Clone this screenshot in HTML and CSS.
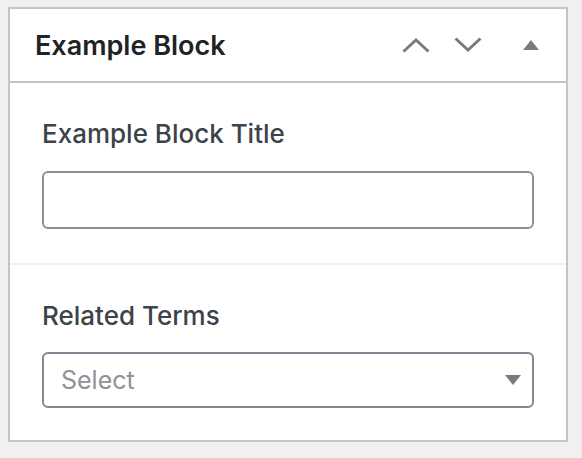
FILE: index.html
```html
<!DOCTYPE html>
<html>
<head>
    <link rel="stylesheet" href="styles.css">
</head>
<body>
    <div class="postbox">
        <div class="postbox-header">
            <h2 class="hndle">Example Block</h2>
            <div class="handle-actions">
                <button class="handle-btn" aria-label="Move up">
                    <svg width="28" height="16" viewBox="0 0 28 16"><path d="M1.5 14.5 L14 3 L26.5 14.5" fill="none" stroke="#787c82" stroke-width="3"/></svg>
                </button>
                <button class="handle-btn" aria-label="Move down">
                    <svg width="28" height="16" viewBox="0 0 28 16"><path d="M1.5 1.5 L14 13 L26.5 1.5" fill="none" stroke="#787c82" stroke-width="3"/></svg>
                </button>
                <button class="handle-btn toggle" aria-label="Toggle panel">
                    <svg width="16" height="10" viewBox="0 0 16 10"><path d="M0 10 L8 0 L16 10 Z" fill="#787c82"/></svg>
                </button>
            </div>
        </div>
        <div class="inside">
            <div class="field">
                <label for="blockTitle">Example Block Title</label>
                <input type="text" id="blockTitle" name="blockTitle">
            </div>
            <div class="field">
                <label for="relatedTerms">Related Terms</label>
                <div class="select-wrap">
                    <select id="relatedTerms" name="relatedTerms">
                        <option value="">Select</option>
                    </select>
                    <svg class="select-arrow" width="16" height="10" viewBox="0 0 16 10"><path d="M0 0 L16 0 L8 10 Z" fill="#787c82"/></svg>
                </div>
            </div>
        </div>
    </div>
</body>
</html>
```

FILE: styles.css
```css
body {
    margin: 0;
    padding: 7px 14px 0 8px;
    background-color: #f0f0f1;
    font-family: Inter, "Liberation Sans", sans-serif;
}

.postbox {
    background-color: #fff;
    border: 2px solid #c3c4c7;
}

.postbox-header {
    display: flex;
    align-items: center;
    justify-content: space-between;
    height: 72px;
    padding: 0 27px 0 25px;
    border-bottom: 2px solid #c3c4c7;
}

.hndle {
    margin: 0;
    font-size: 27px;
    font-weight: 600;
    color: #1d2327;
}

.handle-actions {
    display: flex;
    align-items: center;
}

.handle-btn {
    background: none;
    border: 0;
    padding: 0;
    margin-left: 24px;
    display: flex;
}

.handle-btn.toggle {
    margin-left: 41px;
}

.field {
    padding: 35px 32px 34px;
}

.field + .field {
    border-top: 2px solid #f0f0f1;
    padding-bottom: 32px;
}

label {
    display: block;
    margin-bottom: 21px;
    font-size: 26px;
    line-height: 32px;
    font-weight: 500;
    color: #3c434a;
}

.field + .field label {
    margin-bottom: 20px;
}

input, select {
    display: block;
    box-sizing: border-box;
    width: 100%;
    font-family: inherit;
    font-size: 25px;
    border: 2px solid #8c8f94;
    border-radius: 6px;
    background-color: #fff;
}

input {
    height: 58px;
}

.select-wrap {
    position: relative;
}

select {
    height: 56px;
    padding: 0 17px;
    color: #8f9296;
    border-color: #7e8993;
    appearance: none;
}

.select-arrow {
    position: absolute;
    right: 13px;
    top: 23px;
    pointer-events: none;
}
```
